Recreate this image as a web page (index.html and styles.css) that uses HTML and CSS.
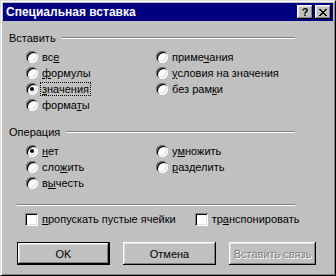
FILE: index.html
```html
<!DOCTYPE html>
<html lang="ru">

<head>
    <meta charset="UTF-8" />
    <meta name="viewport" content="width=device-width, initial-scale=1" />
    <title>Специальная вставка</title>
    <link rel="stylesheet" href="styles.css">
</head>

<body>
    <div class="dialog">
        <div class="titlebar">
            <span class="title">Специальная вставка</span>
            <div class="caption-btns">
                <span class="cbtn help">?</span>
                <span class="cbtn">
                    <svg width="8" height="7" viewBox="0 0 8 7">
                        <path d="M0 0h2v1h1v1h2v-1h1v-1h2v1h-1v1h-1v1h-1v1h1v1h1v1h1v1h-2v-1h-1v-1h-2v1h-1v1h-2v-1h1v-1h1v-1h1v-1h-1v-1h-1v-1h-1z" fill="#000" />
                    </svg>
                </span>
            </div>
        </div>

        <div class="content">
            <div class="group-head">
                <span>Вставить</span>
                <span class="etch"></span>
            </div>
            <div class="options paste">
                <label class="opt"><span class="radio"></span><span>вс<u>е</u></span></label>
                <label class="opt"><span class="radio"></span><span><u>ф</u>ормулы</span></label>
                <label class="opt"><span class="radio checked"></span><span class="focus"><u>з</u>начения</span></label>
                <label class="opt"><span class="radio"></span><span>форма<u>т</u>ы</span></label>
                <label class="opt"><span class="radio"></span><span>приме<u>ч</u>ания</span></label>
                <label class="opt"><span class="radio"></span><span><u>у</u>словия на значения</span></label>
                <label class="opt"><span class="radio"></span><span>без рам<u>к</u>и</span></label>
            </div>

            <div class="group-head">
                <span>Операция</span>
                <span class="etch"></span>
            </div>
            <div class="options oper">
                <label class="opt"><span class="radio checked"></span><span><u>н</u>ет</span></label>
                <label class="opt"><span class="radio"></span><span>сло<u>ж</u>ить</span></label>
                <label class="opt"><span class="radio"></span><span>в<u>ы</u>честь</span></label>
                <label class="opt"><span class="radio"></span><span>у<u>м</u>ножить</span></label>
                <label class="opt"><span class="radio"></span><span><u>р</u>азделить</span></label>
            </div>

            <div class="etch separator"></div>

            <div class="checks">
                <label class="chk"><span class="box"></span><span><u>п</u>ропускать пустые ячейки</span></label>
                <label class="chk second"><span class="box"></span><span>тр<u>а</u>нспонировать</span></label>
            </div>

            <div class="buttons">
                <button class="btn default">OK</button>
                <button class="btn">Отмена</button>
                <button class="btn link" disabled>Вставить связь</button>
            </div>
        </div>
    </div>
</body>

</html>
```

FILE: styles.css
```css
body {
    margin: 0;
    font-family: "Liberation Sans", Arial, sans-serif;
    font-size: 11px;
    color: #000;
}

.dialog {
    width: 336px;
    height: 276px;
    box-sizing: border-box;
    background-color: #c0c0c0;
    border: 1px solid;
    border-color: #dfdfdf #000 #000 #dfdfdf;
    box-shadow: inset 1px 1px #fff, inset -1px -1px #808080;
    padding: 2px;
}

.titlebar {
    height: 18px;
    background-color: #000080;
    color: #fff;
    display: flex;
    align-items: center;
    justify-content: space-between;
    padding: 0 2px 0 3px;
}

.title {
    font-weight: bold;
    font-size: 12px;
}

.caption-btns {
    display: flex;
    gap: 2px;
}

.cbtn {
    width: 16px;
    height: 14px;
    box-sizing: border-box;
    background-color: #c0c0c0;
    color: #000;
    box-shadow: inset -1px -1px #000, inset 1px 1px #fff, inset -2px -2px #808080, inset 2px 2px #dfdfdf;
    display: flex;
    align-items: center;
    justify-content: center;
    font-weight: bold;
    font-size: 11px;
}

.content {
    padding: 10px 38px 0 6px;
}

.group-head {
    display: flex;
    align-items: center;
    gap: 6px;
    height: 13px;
}

.etch {
    flex: 1;
    height: 0;
    border-top: 1px solid #808080;
    border-bottom: 1px solid #fff;
}

.options {
    display: grid;
    grid-template-columns: 130px auto;
    grid-auto-flow: column;
    margin: 5px 0 0 17px;
}

.paste {
    grid-template-rows: repeat(4, 16px);
    margin-bottom: 12px;
}

.oper {
    grid-template-rows: repeat(3, 16px);
    margin-bottom: 13px;
}

.opt,
.chk {
    display: flex;
    align-items: center;
    gap: 4px;
    height: 16px;
    white-space: nowrap;
}

.radio {
    flex: none;
    width: 12px;
    height: 12px;
    border-radius: 50%;
    background-color: #fff;
    box-shadow: inset 1px 1px #808080, inset -1px -1px #fff, inset 2px 2px #000, inset -2px -2px #dfdfdf;
    display: flex;
    align-items: center;
    justify-content: center;
}

.radio.checked::after {
    content: "";
    width: 4px;
    height: 4px;
    border-radius: 50%;
    background-color: #000;
}

.focus {
    outline: 1px dotted #000;
    padding: 0 1px;
    margin-left: -1px;
}

.separator {
    flex: none;
    margin-left: 8px;
}

.checks {
    display: flex;
    margin: 5px 0 0 16px;
}

.chk.second {
    margin-left: 19px;
}

.box {
    flex: none;
    width: 13px;
    height: 13px;
    box-sizing: border-box;
    background-color: #fff;
    box-shadow: inset 1px 1px #808080, inset -1px -1px #fff, inset 2px 2px #000, inset -2px -2px #dfdfdf;
}

.buttons {
    display: flex;
    gap: 13px;
    margin: 15px 0 0 8px;
}

.btn {
    flex: none;
    width: 93px;
    height: 23px;
    box-sizing: border-box;
    font-family: inherit;
    font-size: 11px;
    background-color: #c0c0c0;
    color: #000;
    border: none;
    padding: 0;
    box-shadow: inset -1px -1px #000, inset 1px 1px #fff, inset -2px -2px #808080, inset 2px 2px #dfdfdf;
}

.btn.default {
    border: 1px solid #000;
}

.btn.link {
    width: 87px;
}

.btn:disabled {
    color: #808080;
    text-shadow: 1px 1px #fff;
}
```
